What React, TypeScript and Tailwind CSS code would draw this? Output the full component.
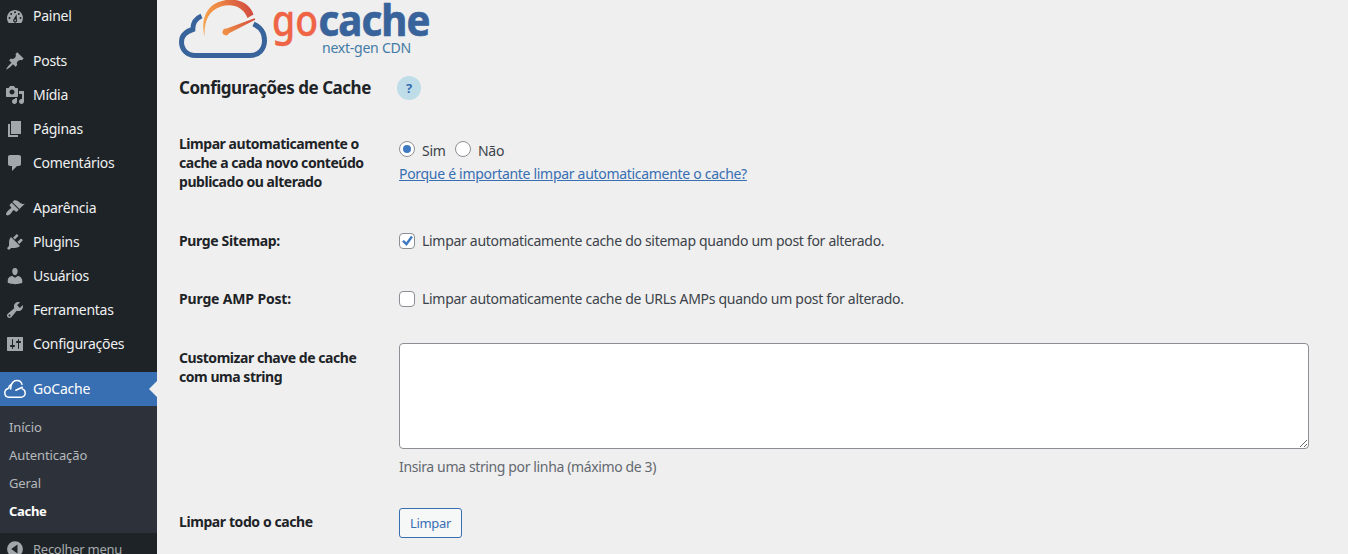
import React from "react";

const PATHS: Record<string, string> = {
  dashboard:
    "M3.76 17h12.48A7.953 7.953 0 0 0 18 12c0-4.41-3.58-8-8-8s-8 3.59-8 8c0 1.9.66 3.65 1.76 5zM10 5.2a1 1 0 1 1 0 2a1 1 0 0 1 0-2zM6.2 7a1 1 0 1 1 0 2a1 1 0 0 1 0-2zM13.8 7a1 1 0 1 1 0 2a1 1 0 0 1 0-2zM4.5 11a1 1 0 1 1 0 2a1 1 0 0 1 0-2zM15.5 11a1 1 0 1 1 0 2a1 1 0 0 1 0-2zM11.6 8.2L11.9 13.6a2 2 0 1 1-3.3-.3zM10.2 13.4a.9.9 0 1 0 0 1.8a.9.9 0 0 0 0-1.8z",
  post: "M10.44 3.02l1.82-1.82 6.36 6.35-1.83 1.82c-1.05-.68-2.48-.57-3.41.36l-.75.75c-.92.93-1.04 2.35-.35 3.41l-1.83 1.82-2.41-2.41-2.8 2.79c-.42.42-3.38 2.71-3.8 2.29s1.86-3.39 2.28-3.81l2.79-2.79L4.1 9.36l1.83-1.82c1.05.69 2.48.57 3.4-.36l.75-.75c.93-.92 1.05-2.35.36-3.41z",
  media:
    "M13 11V4c0-.55-.45-1-1-1h-1.67L9 1H5L3.67 3H2c-.55 0-1 .45-1 1v7c0 .55.45 1 1 1h10c.55 0 1-.45 1-1zM7 4.5c1.38 0 2.5 1.12 2.5 2.5S8.38 9.5 7 9.5 4.5 8.38 4.5 7 5.62 4.5 7 4.5zM14 6h5v10.5c0 1.38-1.12 2.5-2.5 2.5S14 17.88 14 16.5s1.12-2.5 2.5-2.5c.17 0 .34.02.5.05V9h-3V6zm-4 8.05V13h2v3.5c0 1.38-1.12 2.5-2.5 2.5S7 17.88 7 16.5 8.12 14 9.5 14c.17 0 .34.02.5.05z",
  page: "M6 15V2h10v13H6zm-1 1h8v2H3V5h2v11z",
  comments:
    "M5 2h9c1.1 0 2 .9 2 2v7c0 1.1-.9 2-2 2h-2l-5 5v-5H5c-1.1 0-2-.9-2-2V4c0-1.1.9-2 2-2z",
  appearance:
    "M14.48 11.06L7.41 3.99l1.5-1.5c.5-.56 2.3-.47 3.51.32 1.21.8 1.43 1.28 2.91 2.1 1.18.64 2.45 1.26 4.45.85zm-.71.71L6.7 4.7 4.93 6.47c-.39.39-.39 1.02 0 1.41l1.06 1.06c.39.39.39 1.03 0 1.42-.6.6-1.43 1.11-2.21 1.69-.35.26-.7.53-1.01.84C1.43 14.23.4 16.08 1.4 17.07c.99 1 2.84-.03 4.18-1.36.31-.31.58-.66.85-1.02.57-.78 1.08-1.61 1.69-2.21.39-.39 1.02-.39 1.41 0l1.06 1.06c.39.39 1.02.39 1.41 0z",
  plugins:
    "M13.11 4.36L9.87 7.6 8 5.73l3.24-3.24c.35-.34 1.05-.2 1.56.32.52.51.66 1.21.31 1.55zm-8 1.77l.91-1.12 9.01 9.01-1.19.84c-.71.71-2.63 1.16-3.82 1.16H6.14L4.9 17.26c-.59.59-1.54.59-2.12 0-.59-.58-.59-1.53 0-2.12l1.24-1.24v-3.88c0-1.13.4-3.19 1.09-3.89zm7.26 3.97l3.24-3.24c.34-.35 1.04-.21 1.55.31.52.51.66 1.21.31 1.55l-3.24 3.25z",
  users:
    "M10 9.25c-2.27 0-2.73-3.44-2.73-3.44C7 4.02 7.82 2 9.97 2c2.16 0 2.98 2.02 2.71 3.81 0 0-.41 3.44-2.68 3.44zm0 2.57L12.72 10c2.39 0 4.52 2.33 4.52 4.53v2.49s-3.65 1.13-7.24 1.13c-3.65 0-7.24-1.13-7.24-1.13v-2.49c0-2.25 1.94-4.48 4.47-4.48z",
  tools:
    "M16.68 9.77c-1.34 1.34-3.3 1.67-4.95.99l-5.41 6.52c-.99.99-2.59.99-3.58 0s-.99-2.59 0-3.57l6.52-5.42c-.68-1.65-.35-3.61.99-4.95 1.28-1.28 3.12-1.62 4.72-1.06l-2.89 2.89 2.82 2.82 2.86-2.87c.53 1.58.18 3.39-1.08 4.65zM3.81 16.21c.4.39 1.04.39 1.43 0 .4-.4.4-1.04 0-1.43-.39-.4-1.03-.4-1.43 0-.39.39-.39 1.03 0 1.43z",
  settings:
    "M18 16.5V3.5c0-.28-.22-.5-.5-.5h-15c-.28 0-.5.22-.5.5v13c0 .28.22.5.5.5h15c.28 0 .5-.22.5-.5zM8 11h1c.55 0 1 .45 1 1s-.45 1-1 1H8v1.5c0 .28-.22.5-.5.5s-.5-.22-.5-.5V13H6c-.55 0-1-.45-1-1s.45-1 1-1h1V5.5c0-.28.22-.5.5-.5s.5.22.5.5V11zm5-2h-1c-.55 0-1-.45-1-1s.45-1 1-1h1V5.5c0-.28.22-.5.5-.5s.5.22.5.5V7h1c.55 0 1 .45 1 1s-.45 1-1 1h-1v5.5c0 .28-.22.5-.5.5s-.5-.22-.5-.5V9z",
  collapse: "M10 2.2a7.9 7.9 0 1 1 0 15.8a7.9 7.9 0 0 1 0-15.8zM12.5 5.6v9L6.2 10.1z",
};

function Icon({ name }: { name: string }) {
  return (
    <svg viewBox="0 0 20 20" className="h-5 w-5 shrink-0 fill-[#a2a7ac]" fillRule="evenodd">
      <path d={PATHS[name]} />
    </svg>
  );
}

function MenuItem({ icon, label }: { icon: string; label: string }) {
  return (
    <a className="flex h-[34px] items-center gap-2 pl-[5px] text-[#f0f0f1]">
      <Icon name={icon} />
      <span>{label}</span>
    </a>
  );
}

function Sidebar() {
  return (
    <nav className="flex w-[157px] shrink-0 flex-col bg-[#1d2327] text-sm tracking-[-0.27px]">
      <div className="-mt-px flex shrink-0 flex-col gap-[11px]">
        <MenuItem icon="dashboard" label="Painel" />
        <div>
          <MenuItem icon="post" label="Posts" />
          <MenuItem icon="media" label="Mídia" />
          <MenuItem icon="page" label="Páginas" />
          <MenuItem icon="comments" label="Comentários" />
        </div>
        <div>
          <MenuItem icon="appearance" label="Aparência" />
          <MenuItem icon="plugins" label="Plugins" />
          <MenuItem icon="users" label="Usuários" />
          <MenuItem icon="tools" label="Ferramentas" />
          <MenuItem icon="settings" label="Configurações" />
        </div>
        <a className="flex h-[34px] items-center bg-[#386eb2] pl-1 text-white">
          <svg viewBox="0 0 22 20" className="mr-[7px] h-5 w-[22px] shrink-0" fill="none" stroke="#fff" strokeLinecap="round">
            <path strokeWidth="1.5" d="M4.6 9.2C1.6 10.2.7 12.4.8 14c.1 2.600 2 4.200 4.200 4.200h12c2.400 0 4.200-1.900 4.200-4.200 0-2-1.100-3.500-2.900-4.100" />
            <path strokeWidth="1.500" d="M4.700 9.200c.1-2 .9-3 2.100-3.600M7 7c1-3.500 3.200-5.400 6-5.400 2.500 0 4.300 1.400 5 3.800M7 7l-.3 3" />
            <path strokeWidth="1.500" d="M11.800 11.300l6.500-3.100" />
          </svg>
          <span className="tracking-[-0.2px]">GoCache</span>
          <svg viewBox="0 0 8 16" className="ml-auto h-4 w-2 fill-[#efefef]">
            <path d="M8 0v16L0 8z" />
          </svg>
        </a>
      </div>
      <div className="flex h-[127px] shrink-0 flex-col bg-[#2d323a] pt-[7px] pl-[9px] text-[13px] leading-7 tracking-[-0.1px] text-[#b6b9bc]">
        <a>Início</a>
        <a>Autenticação</a>
        <a>Geral</a>
        <a className="font-bold tracking-[-0.3px] text-white">Cache</a>
      </div>
      <a className="flex h-8 shrink-0 items-center gap-2 pl-[5px] text-[13px] text-[#a7aaad]">
        <Icon name="collapse" />
        <span>Recolher menu</span>
      </a>
    </nav>
  );
}

function Logo() {
  return (
    <svg viewBox="0 0 252 60" className="h-[60px] w-[252px] font-['Noto_Sans',sans-serif]" fill="none">
      <defs>
        <linearGradient id="gauge" x1="25" y1="30" x2="75" y2="12" gradientUnits="userSpaceOnUse">
          <stop offset="0" stopColor="#f5a54c" />
          <stop offset=".4" stopColor="#ee8a45" />
          <stop offset="1" stopColor="#d0483f" />
        </linearGradient>
      </defs>
      <path
        d="M22.500 16C16.500 18.500 13.800 23 13.800 29.500C7 31.500 2.500 36 2.500 42C2.500 50 8.500 55.500 16 55.500H71C80 55.500 85.500 49 85.500 40.500C85.500 32.500 81 27 74.500 24"
        stroke="#38639b"
        strokeWidth="5"
      />
      <path
        d="M25.500 37C22 22 25.500 8 39 2.300C54-4 70 1 74.500 14.500L68.500 18C63.500 5.500 52 3.500 42 6.500C29.500 10.500 25 21 25.500 37Z"
        fill="url(#gauge)"
      />
      <path d="M76.300 19.800L50 33.300A3.400 3.400 0 1 1 47.700 28.600L75.500 18.300Z" fill="url(#gauge)" />
      <text x="93" y="36" fontSize="43" textLength="46" lengthAdjust="spacingAndGlyphs" fill="#ee6444" stroke="#ee6444" strokeWidth=".4" className="font-medium tracking-normal">
        go
      </text>
      <text x="139.500" y="36" fontSize="43" textLength="111" lengthAdjust="spacingAndGlyphs" fill="#38639b" stroke="#38639b" strokeWidth=".7" className="font-bold tracking-[-1px]">
        cache
      </text>
      <text x="143" y="53" fontSize="15" textLength="89" lengthAdjust="spacingAndGlyphs" fill="#437ba5">
        next-gen CDN
      </text>
    </svg>
  );
}

function Heading({ children, tracking = "tracking-[-0.46px]" }: { children: React.ReactNode; tracking?: string }) {
  return <div className={`w-[220px] shrink-0 font-bold leading-[19px] text-[#1d2327] ${tracking}`}>{children}</div>;
}

function Box({ checked = false, round = false }: { checked?: boolean; round?: boolean }) {
  return (
    <span
      className={`flex h-4 w-4 shrink-0 items-center justify-center border border-[#8c8f94] bg-white ${round ? "rounded-full" : "mt-0.5 rounded"}`}
    >
      {checked && round && <span className="h-2 w-2 rounded-full bg-[#3f79c2]" />}
      {checked && !round && (
        <svg viewBox="0 0 14 14" className="h-[14px] w-[14px] fill-[#3f79c2]">
          <path d="M11 1.800L12.900 3.200L6.600 12L2 7.400L3.900 5.900L6.300 8.300Z" />
        </svg>
      )}
    </span>
  );
}

export default function App() {
  return (
    <div className="flex h-[554px] w-[1348px] overflow-hidden bg-[#efefef] font-['Noto_Sans',sans-serif] text-sm tracking-[-0.3px] text-[#3c434a]">
      <Sidebar />
      <main className="flex flex-1 flex-col pl-[22px]">
        <div className="h-[60px]">
          <Logo />
        </div>
        <div className="mt-[15px] flex h-6 items-center gap-[26px]">
          <h1 className="mt-[3px] w-[192px] text-[17px] font-bold tracking-[-0.48px] whitespace-nowrap text-[#1d2327]">Configurações de Cache</h1>
          <span className="mt-0.5 flex h-6 w-6 items-center justify-center rounded-full bg-[#bfdce9] text-[13px] font-bold text-[#386eb2]">?</span>
        </div>
        <div className="mt-[35px] flex h-[58px]">
          <Heading>
            Limpar automaticamente o
            <br />
            cache a cada novo conteúdo
            <br />
            publicado ou alterado
          </Heading>
          <div className="pt-[5px]">
            <div className="flex h-5 items-center">
              <Box round checked />
              <span className="mt-[3px] ml-[7px] w-[33px]">Sim</span>
              <Box round />
              <span className="mt-[3px] ml-[7px]">Não</span>
            </div>
            <a className="mt-[5px] block leading-5 text-[#386eb2] underline">Porque é importante limpar automaticamente o cache?</a>
          </div>
        </div>
        <div className="mt-[39px] flex h-5">
          <Heading tracking="tracking-[-0.36px]">Purge Sitemap:</Heading>
          <Box checked />
          <span className="ml-[7px]">Limpar automaticamente cache do sitemap quando um post for alterado.</span>
        </div>
        <div className="mt-[38px] flex h-5">
          <Heading tracking="tracking-[-0.16px]">Purge AMP Post:</Heading>
          <Box />
          <span className="ml-[7px]">Limpar automaticamente cache de URLs AMPs quando um post for alterado.</span>
        </div>
        <div className="mt-[34px] flex h-[134px]">
          <div className="pt-[5px]">
            <Heading>
              Customizar chave de cache
              <br />
              com uma string
            </Heading>
          </div>
          <div>
            <textarea className="block h-[106px] w-[910px] rounded border border-[#8c8f94] bg-white" />
            <p className="mt-2 leading-5 tracking-[-0.37px] text-[#646970]">Insira uma string por linha (máximo de 3)</p>
          </div>
        </div>
        <div className="mt-[31px] flex h-[30px]">
          <div className="pt-1">
            <Heading tracking="tracking-[-0.41px]">Limpar todo o cache</Heading>
          </div>
          <button className="h-[30px] w-[63px] rounded-[3px] border border-[#386eb2] bg-[#f6f7f7] text-[13px] text-[#386eb2]">Limpar</button>
        </div>
      </main>
    </div>
  );
}
